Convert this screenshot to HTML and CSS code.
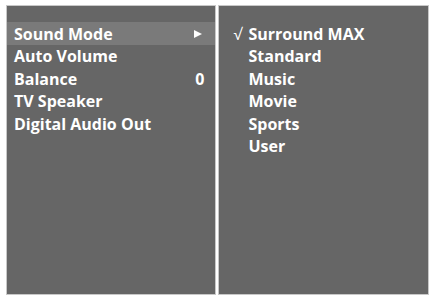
FILE: index.html
```html
<!DOCTYPE html>
<html lang="en">
<head>
  <meta charset="UTF-8">
  <title>Sound Menu</title>
  <link rel="stylesheet" href="styles.css">
</head>
<body>
  <div class="menu">
    <ul class="panel main">
      <li class="row active"><span>Sound Mode</span><span class="arrow"></span></li>
      <li class="row"><span>Auto Volume</span></li>
      <li class="row"><span>Balance</span><span class="value">0</span></li>
      <li class="row"><span>TV Speaker</span></li>
      <li class="row"><span>Digital Audio Out</span></li>
    </ul>
    <ul class="panel sub">
      <li class="row"><span class="check">&#8730;</span><span>Surround MAX</span></li>
      <li class="row"><span class="check"></span><span>Standard</span></li>
      <li class="row"><span class="check"></span><span>Music</span></li>
      <li class="row"><span class="check"></span><span>Movie</span></li>
      <li class="row"><span class="check"></span><span>Sports</span></li>
      <li class="row"><span class="check"></span><span>User</span></li>
    </ul>
  </div>
</body>
</html>
```

FILE: styles.css
```css
* {
  margin: 0;
  padding: 0;
  box-sizing: border-box;
}

body {
  background: #fff;
  font-family: "Open Sans", "DejaVu Sans", sans-serif;
  font-weight: bold;
  color: #fff;
  padding: 5px 6px 0 6px;
}

.menu {
  display: flex;
  gap: 2px;
  height: 290px;
}

.panel {
  list-style: none;
  background: #666;
  border: 1px solid #c8c8c8;
  padding-top: 16px;
}

.main {
  width: 211px;
}

.sub {
  width: 211px;
  padding-left: 7px;
}

.row {
  display: flex;
  align-items: center;
  height: 22.5px;
  font-size: 16px;
  padding: 1px 11px 0 7px;
}

.main .row {
  justify-content: space-between;
}

.row.active {
  background: #7a7a7a;
}

.arrow {
  width: 0;
  height: 0;
  border-left: 8px solid #fff;
  border-top: 4.5px solid transparent;
  border-bottom: 4.5px solid transparent;
  margin-right: 2px;
}

.check {
  width: 15px;
  font-weight: normal;
}
```
